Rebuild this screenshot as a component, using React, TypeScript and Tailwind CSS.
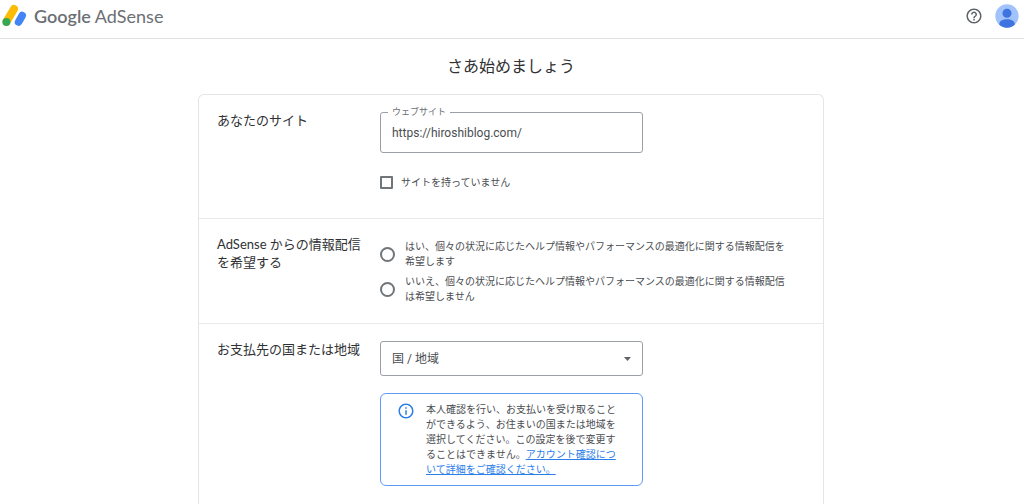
import type { ReactNode } from "react";

function AdSenseMark() {
  return (
    <svg className="h-7 w-7 shrink-0" viewBox="0 0 28 28" fill="none" aria-hidden="true">
      <path d="M6.6 19.6 14 6.9" stroke="#fbbc04" strokeWidth="8" strokeLinecap="round" />
      <path d="M18.6 20 22.2 13.6" stroke="#4285f4" strokeWidth="7.6" strokeLinecap="round" />
      <circle cx="6.4" cy="20" r="4" fill="#34a853" />
    </svg>
  );
}

function HelpIcon() {
  return (
    <svg className="h-[18px] w-[18px]" viewBox="0 0 24 24" fill="#5f6368" aria-hidden="true">
      <path d="M11 18h2v-2h-2v2zm1-16C6.48 2 2 6.48 2 12s4.48 10 10 10 10-4.48 10-10S17.52 2 12 2zm0 18c-4.41 0-8-3.59-8-8s3.59-8 8-8 8 3.59 8 8-3.59 8-8 8zm0-14c-2.21 0-4 1.79-4 4h2c0-1.1.9-2 2-2s2 .9 2 2c0 2-3 1.75-3 5h2c0-2.25 3-2.5 3-5 0-2.21-1.79-4-4-4z" />
    </svg>
  );
}

function Avatar() {
  return (
    <svg className="h-6 w-6" viewBox="0 0 24 24" aria-hidden="true">
      <defs>
        <clipPath id="avatar-circle">
          <circle cx="12" cy="12" r="11.7" />
        </clipPath>
      </defs>
      <g clipPath="url(#avatar-circle)">
        <rect width="24" height="24" fill="#a1c2fa" />
        <circle cx="12" cy="9.3" r="4.5" fill="#3f73df" />
        <path d="M4.3 20.2c0-3.6 3.6-5 7.7-5s7.7 1.4 7.7 5V24H4.3z" fill="#3f73df" />
      </g>
    </svg>
  );
}

function InfoIcon() {
  return (
    <svg className="h-[18px] w-[18px] shrink-0" viewBox="0 0 24 24" fill="#2b7de9" aria-hidden="true">
      <path d="M11 7h2v2h-2zm0 4h2v6h-2zm1-9C6.48 2 2 6.48 2 12s4.48 10 10 10 10-4.48 10-10S17.52 2 12 2zm0 18c-4.41 0-8-3.59-8-8s3.59-8 8-8 8 3.59 8 8-3.59 8-8 8z" />
    </svg>
  );
}

function Section({ title, className, children }: { title: string; className: string; children: ReactNode }) {
  return (
    <section className={`flex px-[18px] pt-4 ${className}`}>
      <h2 className="w-[163px] shrink-0 pr-3 font-['Lato','Noto_Sans_CJK_JP',sans-serif] text-[13px] leading-[18px] text-[#303134]">
        {title}
      </h2>
      <div className="min-w-0 flex-1 pt-px">{children}</div>
    </section>
  );
}

function RadioOption({ value, children }: { value: string; children: ReactNode }) {
  return (
    <label className="flex items-center gap-[10px] leading-[15px]">
      <input
        type="radio"
        name="news"
        value={value}
        className="h-[15px] w-[15px] shrink-0 appearance-none rounded-full border-2 border-[#70757a] bg-white checked:border-[#1a73e8] checked:bg-[#1a73e8]"
      />
      <span className="max-w-[388px]">{children}</span>
    </label>
  );
}

export default function App() {
  return (
    <div className="flex min-h-screen flex-col bg-white font-['Roboto','Noto_Sans_CJK_JP',sans-serif] text-[10px] text-[#4a4d51]">
      <header className="flex h-[39px] shrink-0 items-center justify-between border-b border-[#e0e0e0] pb-1.5 pr-[5px]">
        <a href="#home" className="flex items-center gap-1.5 font-['Lato',sans-serif] text-[18px] leading-6 text-[#6b6f74]">
          <AdSenseMark />
          <span>
            <span className="font-semibold">Google</span> AdSense
          </span>
        </a>
        <div className="flex items-center gap-3">
          <button type="button" aria-label="ヘルプ">
            <HelpIcon />
          </button>
          <button type="button" aria-label="アカウント">
            <Avatar />
          </button>
        </div>
      </header>

      <div className="flex flex-1 flex-col pr-0.5">
        <main className="mx-auto flex w-full max-w-[626px] flex-1 flex-col">
          <h1 className="pb-[15px] pt-4 text-center text-[16px] leading-6 text-[#303134]">さあ始めましょう</h1>

          <form className="flex-1 rounded-t-md border border-b-0 border-[#e4e5e7]">
            <Section title="あなたのサイト" className="border-b border-[#e8eaed] pb-7">
              <div className="relative max-w-[263px]">
                <label htmlFor="site" className="absolute -top-[7px] left-2 bg-white px-1 text-[9px] leading-[14px] text-[#6b6f74]">
                  ウェブサイト
                </label>
                <input
                  id="site"
                  type="text"
                  defaultValue="https://hiroshiblog.com/"
                  className="h-[41px] w-full rounded-[3px] border border-[#9aa0a6] px-[11px] text-[12px]"
                />
              </div>
              <label className="mt-[22px] flex items-center gap-2 leading-[15px]">
                <input
                  type="checkbox"
                  className="h-[13px] w-[13px] appearance-none rounded-[1px] border-2 border-[#70757a] bg-white checked:border-[#1a73e8] checked:bg-[#1a73e8]"
                />
                サイトを持っていません
              </label>
            </Section>

            <Section title="AdSense からの情報配信を希望する" className="border-b border-[#e8eaed] pb-[19px]">
              <div className="flex flex-col gap-[5px] pt-[3px]">
                <RadioOption value="yes">
                  はい、個々の状況に応じたヘルプ情報やパフォーマンスの最適化に関する情報配信を希望します
                </RadioOption>
                <RadioOption value="no">
                  いいえ、個々の状況に応じたヘルプ情報やパフォーマンスの最適化に関する情報配信は希望しません
                </RadioOption>
              </div>
            </Section>

            <Section title="お支払先の国または地域" className="">
              <div className="relative max-w-[263px]">
                <select
                  aria-label="国 / 地域"
                  className="block h-[35px] w-full appearance-none rounded-[3px] border border-[#9aa0a6] bg-white px-[11px] text-[12px]"
                >
                  <option>国 / 地域</option>
                </select>
                <svg className="pointer-events-none absolute right-3 top-4 h-1 w-[7px]" viewBox="0 0 7 4" fill="#5f6368" aria-hidden="true">
                  <path d="M0 0h7L3.5 4z" />
                </svg>
              </div>
              <div className="mt-[17px] flex max-w-[263px] gap-[11px] rounded-md border border-[#5e9bf6] py-2 pl-4 pr-[18px]">
                <InfoIcon />
                <p className="leading-[15px]">
                  本人確認を行い、お支払いを受け取ることができるよう、お住まいの国または地域を選択してください。この設定を後で変更することはできません。
                  <a href="#verify" className="text-[#2b7de9] underline">
                    アカウント確認について詳細をご確認ください。
                  </a>
                </p>
              </div>
            </Section>
          </form>
        </main>
      </div>
    </div>
  );
}
